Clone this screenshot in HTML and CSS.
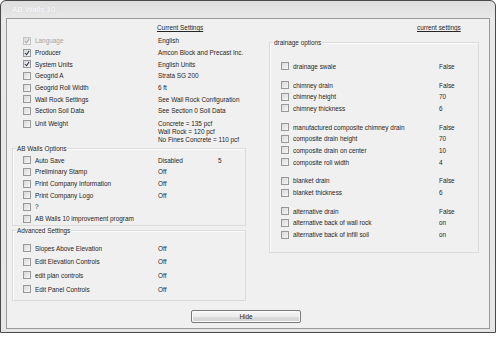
FILE: index.html
```html
<!DOCTYPE html>
<html lang="en">
<head>
    <meta charset="UTF-8">
    <title>AB Walls 10</title>
    <link rel="stylesheet" href="styles.css">
</head>
<body>
    <div class="window">
        <div class="titlebar">AB Walls 10</div>
        <div class="client">
            <div class="columns">
                <div class="col left">
                    <div class="head">Current Settings</div>
                    <div class="rows">
                        <div class="row disabled"><span class="cb on"><svg viewBox="0 0 7 7"><path d="M1 3.5 L3 5.5 L6 1"/></svg></span><span class="label">Language</span><span class="val">English</span></div>
                        <div class="row"><span class="cb on"><svg viewBox="0 0 7 7"><path d="M1 3.5 L3 5.5 L6 1"/></svg></span><span class="label">Producer</span><span class="val">Amcon Block and Precast Inc.</span></div>
                        <div class="row"><span class="cb on"><svg viewBox="0 0 7 7"><path d="M1 3.5 L3 5.5 L6 1"/></svg></span><span class="label">System Units</span><span class="val">English Units</span></div>
                        <div class="row"><span class="cb"></span><span class="label">Geogrid A</span><span class="val">Strata SG 200</span></div>
                        <div class="row"><span class="cb"></span><span class="label">Geogrid Roll Width</span><span class="val">6 ft</span></div>
                        <div class="row"><span class="cb"></span><span class="label">Wall Rock Settings</span><span class="val">See Wall Rock Configuration</span></div>
                        <div class="row"><span class="cb"></span><span class="label">Section Soil Data</span><span class="val">See Section 0 Soil Data</span></div>
                        <div class="row multi"><span class="cb"></span><span class="label">Unit Weight</span><span class="val">Concrete = 135 pcf<br>Wall Rock = 120 pcf<br>No Fines Concrete = 110 pcf</span></div>
                    </div>
                    <fieldset class="group options">
                        <legend>AB Walls Options</legend>
                        <div class="row"><span class="cb"></span><span class="label">Auto Save</span><span class="val short">Disabled</span><span class="val">5</span></div>
                        <div class="row"><span class="cb"></span><span class="label">Preliminary Stamp</span><span class="val">Off</span></div>
                        <div class="row"><span class="cb"></span><span class="label">Print Company Information</span><span class="val">Off</span></div>
                        <div class="row"><span class="cb"></span><span class="label">Print Company Logo</span><span class="val">Off</span></div>
                        <div class="row"><span class="cb"></span><span class="label">?</span></div>
                        <div class="row"><span class="cb"></span><span class="label wide">AB Walls 10 improvement program</span></div>
                    </fieldset>
                    <fieldset class="group advanced">
                        <legend>Advanced Settings</legend>
                        <div class="row"><span class="cb"></span><span class="label">Slopes Above Elevation</span><span class="val">Off</span></div>
                        <div class="row"><span class="cb"></span><span class="label">Edit Elevation Controls</span><span class="val">Off</span></div>
                        <div class="row"><span class="cb"></span><span class="label">edit plan controls</span><span class="val">Off</span></div>
                        <div class="row"><span class="cb"></span><span class="label">Edit Panel Controls</span><span class="val">Off</span></div>
                    </fieldset>
                </div>
                <div class="col right">
                    <div class="head">current settings</div>
                    <fieldset class="group drainage">
                        <legend>drainage options</legend>
                        <div class="block">
                            <div class="row"><span class="cb"></span><span class="label">drainage swale</span><span class="val">False</span></div>
                        </div>
                        <div class="block">
                            <div class="row"><span class="cb"></span><span class="label">chimney drain</span><span class="val">False</span></div>
                            <div class="row"><span class="cb"></span><span class="label">chimney height</span><span class="val">70</span></div>
                            <div class="row"><span class="cb"></span><span class="label">chimney thickness</span><span class="val">6</span></div>
                        </div>
                        <div class="block">
                            <div class="row"><span class="cb"></span><span class="label">manufactured composite chimney drain</span><span class="val">False</span></div>
                            <div class="row"><span class="cb"></span><span class="label">composite drain height</span><span class="val">70</span></div>
                            <div class="row"><span class="cb"></span><span class="label">composite drain on center</span><span class="val">10</span></div>
                            <div class="row"><span class="cb"></span><span class="label">composite roll width</span><span class="val">4</span></div>
                        </div>
                        <div class="block">
                            <div class="row"><span class="cb"></span><span class="label">blanket drain</span><span class="val">False</span></div>
                            <div class="row"><span class="cb"></span><span class="label">blanket thickness</span><span class="val">6</span></div>
                        </div>
                        <div class="block">
                            <div class="row"><span class="cb"></span><span class="label">alternative drain</span><span class="val">False</span></div>
                            <div class="row"><span class="cb"></span><span class="label">alternative back of wall rock</span><span class="val">on</span></div>
                            <div class="row"><span class="cb"></span><span class="label">alternative back of infill soil</span><span class="val">on</span></div>
                        </div>
                    </fieldset>
                </div>
            </div>
            <div class="footer">
                <button class="btn">Hide</button>
            </div>
        </div>
    </div>
</body>
</html>
```

FILE: styles.css
```css
body { margin: 0; background: #ffffff; font-family: "Liberation Sans", Arial, sans-serif; font-size: 6.4px; color: #262626; }

.window {
    width: 496px;
    height: 333px;
    border: 1px solid #4a4a4a;
    border-radius: 6px 6px 0 0;
    background: linear-gradient(#dedede, #e9e9e9 18px, #e6e6e6);
    padding: 0 5px 3px 5px;
    box-sizing: border-box;
    display: flex;
    flex-direction: column;
}
.titlebar {
    height: 17px;
    line-height: 17px;
    padding-left: 6px;
    color: #fbfbfb;
    font-size: 8px;
    text-shadow: 0 0 2px #d0d0d0;
}
.client {
    flex: 1;
    background: #f0f0f0;
    border: 1px solid #9a9a9a;
    display: flex;
    flex-direction: column;
}
.columns { display: flex; }
.col { display: flex; flex-direction: column; }
.left { width: 243px; }
.right { width: 241px; }

.head { text-decoration: underline; line-height: 9px; margin-top: 4px; margin-bottom: 3px; }
.left .head { padding-left: 150px; }
.right .head { padding-left: 168px; margin-bottom: 0; }

.row { display: flex; align-items: center; height: 11.7px; white-space: nowrap; }
.rows { padding-left: 16px; }
.row.multi { height: auto; align-items: flex-start; padding-top: 3px; line-height: 8px; }
.row.multi .cb { margin-top: 0.5px; }

.cb {
    width: 6px;
    height: 6px;
    border: 1px solid #999999;
    background: linear-gradient(135deg, #d9d9d9, #f7f7f7);
    flex: none;
    margin-right: 4px;
    display: flex;
}
.cb svg { width: 6px; height: 6px; }
.cb path { fill: none; stroke: #2a3a5a; stroke-width: 1.2; }
.disabled .label { color: #a6a6a6; }
.disabled .cb { border-color: #c4c4c4; }
.disabled .cb path { stroke: #a8a8a8; }

.label { width: 123px; overflow: visible; }
.label.wide { width: auto; }
.val.short { width: 60px; }

.group {
    margin: 0;
    border: 1px solid #dcdcdc;
    box-shadow: inset 1px 1px 0 #fbfbfb;
    padding: 0;
}
.group legend { padding: 0 1px; margin-left: 3px; line-height: 9px; }

.options { margin-left: 5px; width: 234px; box-sizing: border-box; padding: 1.5px 0 1px 0; }
.advanced { margin: 0 0 0 5px; width: 234px; box-sizing: border-box; padding: 6px 0 4px 0; }
.options .row, .advanced .row { margin-left: 10px; }
.advanced .row { height: 13.6px; }

.drainage { margin: 6px 0 0 20px; width: 210px; box-sizing: border-box; padding: 13.5px 0 12px 0; }
.drainage .block { padding-left: 11px; margin-bottom: 7px; }
.drainage .block:last-child { margin-bottom: 0; }
.drainage .label { width: 146px; }

.footer { margin-top: auto; padding-bottom: 5px; display: flex; justify-content: center; padding-right: 4px; }
.btn {
    width: 110px;
    height: 13px;
    padding: 0;
    font-family: inherit;
    font-size: 6.4px;
    color: #262626;
    border: 1px solid #7a7a7a;
    border-radius: 2px;
    background: linear-gradient(#f6f6f6, #ececec 50%, #dedede 51%, #d2d2d2);
    box-shadow: inset 0 0 0 1px #fbfbfb;
}
```
